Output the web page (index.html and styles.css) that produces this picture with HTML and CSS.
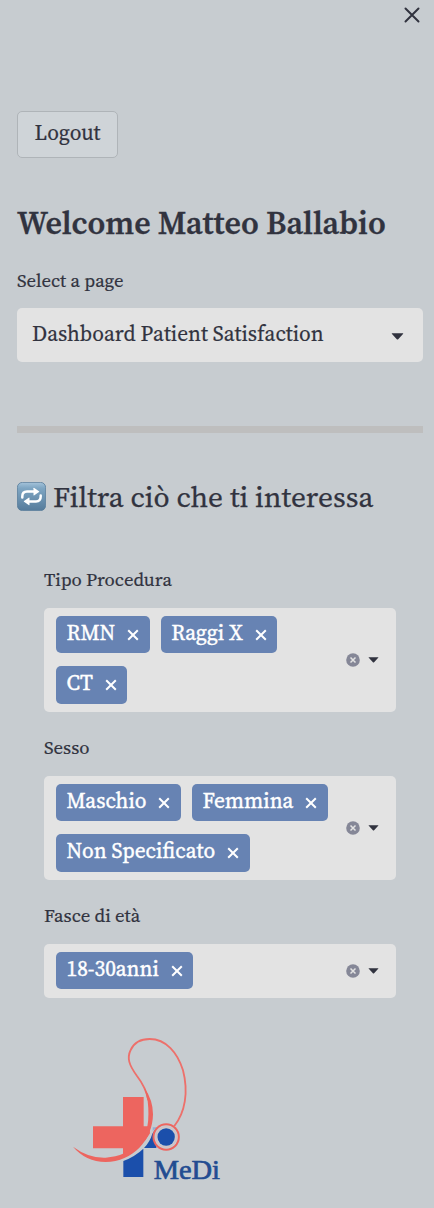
FILE: index.html
```html
<!DOCTYPE html>
<html lang="it">
<head>
<meta charset="utf-8">
<title>Dashboard Patient Satisfaction</title>
<link rel="stylesheet" href="styles.css">
</head>
<body>
<svg class="defs" width="0" height="0" aria-hidden="true">
  <symbol id="x" viewBox="0 0 12 12"><path d="M1.2 1.2 10.8 10.8M10.8 1.2 1.2 10.8" fill="none" stroke="currentColor" stroke-width="2"/></symbol>
  <symbol id="clear" viewBox="0 0 14 14"><circle cx="7" cy="7" r="6.8" fill="#858797"/><path d="M4.5 4.5 9.5 9.5M9.5 4.5 4.5 9.5" stroke="#e3e3e3" stroke-width="1.5"/></symbol>
  <symbol id="caret" viewBox="0 0 12 7"><path d="M.4.3H11.6Q12 .5 11.5 1L6.7 6.2Q6 6.8 5.3 6.2L.5 1Q0 .5.4.3Z" fill="#31333f"/></symbol>
</svg>
<aside class="sidebar">
  <header class="top"><button class="close" aria-label="Close"><svg width="16" height="16" viewBox="0 0 16 16"><path d="M1.5 1.5 14.5 14.5M14.5 1.5 1.5 14.5" stroke="#31333f" stroke-width="2" stroke-linecap="round"/></svg></button></header>
  <button class="logout"><span>Logout</span></button>
  <h1 class="welcome">Welcome Matteo Ballabio</h1>
  <label class="label page-label">Select a page</label>
  <div class="select"><span class="value">Dashboard Patient Satisfaction</span><svg class="caret-lg"><use href="#caret"/></svg></div>
  <hr class="rule">
  <h2 class="filter-title">
    <svg width="29" height="29" viewBox="0 0 29 29">
      <defs><linearGradient id="tile" x2="0" y2="1"><stop offset="0" stop-color="#a5c3da"/><stop offset=".2" stop-color="#7fa6c3"/><stop offset="1" stop-color="#557b9b"/></linearGradient></defs>
      <rect x=".4" y=".4" width="28.2" height="28.2" rx="5" fill="url(#tile)" stroke="#587c9b" stroke-width=".8"/>
      <path d="M5.3 15.500V14.500Q5.300 9.600 10 9.600H18" fill="none" stroke="#fff" stroke-width="2.500" stroke-linecap="round"/><path d="M16.500 6.300Q16.500 5.500 17.300 6L22 9.200Q22.500 9.600 22 10L17.300 13.200Q16.500 13.700 16.500 12.900Z" fill="#fff"/>
      <path d="M23.700 13.500V14.500Q23.700 19.400 19 19.400H11" fill="none" stroke="#fff" stroke-width="2.500" stroke-linecap="round"/><path d="M12.500 22.700Q12.500 23.500 11.700 23L7 19.800Q6.500 19.400 7 19L11.700 15.800Q12.500 15.300 12.500 16.100Z" fill="#fff"/>
    </svg>
    <span>Filtra ciò che ti interessa</span>
  </h2>
  <section class="filters">
    <div class="field"><label class="label">Tipo Procedura</label>
      <div class="multi"><div class="chips">
        <span class="chip"><span>RMN</span><svg><use href="#x"/></svg></span>
        <span class="chip"><span>Raggi X</span><svg><use href="#x"/></svg></span>
        <span class="chip"><span>CT</span><svg><use href="#x"/></svg></span>
      </div><div class="tools"><svg class="clear"><use href="#clear"/></svg><svg class="caret"><use href="#caret"/></svg></div></div>
    </div>
    <div class="field"><label class="label">Sesso</label>
      <div class="multi"><div class="chips">
        <span class="chip"><span>Maschio</span><svg><use href="#x"/></svg></span>
        <span class="chip"><span>Femmina</span><svg><use href="#x"/></svg></span>
        <span class="chip"><span>Non Specificato</span><svg><use href="#x"/></svg></span>
      </div><div class="tools"><svg class="clear"><use href="#clear"/></svg><svg class="caret"><use href="#caret"/></svg></div></div>
    </div>
    <div class="field"><label class="label">Fasce di età</label>
      <div class="multi single"><div class="chips">
        <span class="chip"><span>18-30anni</span><svg><use href="#x"/></svg></span>
      </div><div class="tools"><svg class="clear"><use href="#clear"/></svg><svg class="caret"><use href="#caret"/></svg></div></div>
    </div>
  </section>
  <svg class="logo" viewBox="0 0 540 510" role="img" aria-label="MeDi">
    <path d="M190 408Q226 394 250 371V456H190Z" fill="#1b4fab"/>
    <path d="M252 369Q270 350 277 326L289 308V369Z" fill="#1b4fab"/>
    <path d="M278 318V307H290Z" fill="#8fb1d6"/>
    <path d="M189 216H251V304H268L270 325Q249 366 189 397V370H99V304H189Z" fill="#ed655f"/>
    <path d="M265 226Q258 188 231 153C207 120 200 99 212 75C223 51 244 42 269 42C318 42 353 83 369 136C386 202 375 263 343 303" fill="none" stroke="#ed706b" stroke-width="5.500"/>
    <path d="M39 365Q86 400 137 398Q197 395 240 352Q273 316 263 227L253 188Q279 225 279 268C278 345 219 411 137 411Q77 410 39 365Z" fill="#ed655f"/>
    <circle cx="318.500" cy="336" r="41" fill="#ed655f"/><circle cx="318.500" cy="336" r="35" fill="#c7ccd0"/>
    <circle cx="318.500" cy="336" r="31" fill="none" stroke="#dfb5b6" stroke-width="2"/>
    <circle cx="318.500" cy="336" r="26" fill="#1b4fab"/>
    <text class="brand" x="281" y="462" textLength="199" lengthAdjust="spacingAndGlyphs">MeDi</text>
  </svg>
</aside>
</body>
</html>
```
FILE: styles.css
```css
* { box-sizing: border-box; }
body { margin: 0; background: #c7ccd0; color: #31333f; font-family: "Source Serif Pro", "Source Serif 4", "Liberation Serif", serif; }
.defs { display: none; }
svg { display: block; flex: none; }
button { font: inherit; color: inherit; }
.sidebar { height: 1208px; padding: 0 11px 0 17px; display: flex; flex-direction: column; overflow: hidden; }
.top { height: 111px; flex: none; display: flex; justify-content: flex-end; align-items: flex-start; padding: 7px 3px 0 0; }
.close { border: 0; background: none; padding: 0; width: 16px; height: 16px; }
.close svg { width: 16px; }
.logout { width: 101px; height: 47px; flex: none; padding: 0 0 4px; background: #cfd4d8; border: 1px solid #afb4b8; border-radius: 5px; font-size: 21.33px; -webkit-text-stroke: .2px; }
.welcome { margin: 41px 0 0; height: 48px; line-height: 48px; font-size: 32px; font-weight: 600; -webkit-text-stroke: .3px; white-space: nowrap; }
.label { display: block; font-size: 18.67px; line-height: 28px; height: 28px; -webkit-text-stroke: .2px; white-space: nowrap; }
.page-label { margin-top: 20px; }
.select { margin-top: 13px; height: 54px; padding: 0 19px 3px 15px; display: flex; align-items: center; justify-content: space-between; background: #e3e3e3; border-radius: 5px; font-size: 21.33px; white-space: nowrap; flex: none; -webkit-text-stroke: .2px; }
.caret-lg { width: 13px; height: 7px; margin-top: 6px; }
.rule { width: 100%; height: 7px; flex: none; margin: 64px 0 0; border: 0; background: #bebebe; }
.filter-title { margin: 45px 0 0; height: 37px; display: flex; align-items: center; gap: 7px; font-size: 29.33px; font-weight: 400; white-space: nowrap; flex: none; -webkit-text-stroke: .25px; }
.filters { margin: 51px 27px 0; display: flex; flex-direction: column; gap: 22px; flex: none; }
.multi { margin-top: 14px; height: 104px; padding: 8px 17px 8px 12px; display: flex; justify-content: space-between; background: #e3e3e3; border-radius: 5px; }
.single { height: 54px; }
.chips { width: 280px; display: flex; flex-wrap: wrap; align-content: flex-start; gap: 13px 11px; }
.chip { height: 37.33px; padding: 0 10.5px; display: flex; align-items: center; gap: 12px; background: #6783b3; border-radius: 5px; color: #fff; font-size: 21.33px; -webkit-text-stroke: .4px; white-space: nowrap; }
.chip > span { padding-bottom: 4px; }
.chip svg { width: 12px; height: 12px; margin-top: 1px; }
.tools { display: flex; align-items: center; gap: 8px; }
.clear { width: 14px; height: 14px; }
.caret { width: 11px; height: 6px; }
.logo { width: 180px; height: 170px; margin: 27px 0 0 43px; flex: none; }
.brand { font-family: "Liberation Serif", serif; font-size: 82px; fill: #224c91; stroke: #224c91; stroke-width: 2px; }
```
